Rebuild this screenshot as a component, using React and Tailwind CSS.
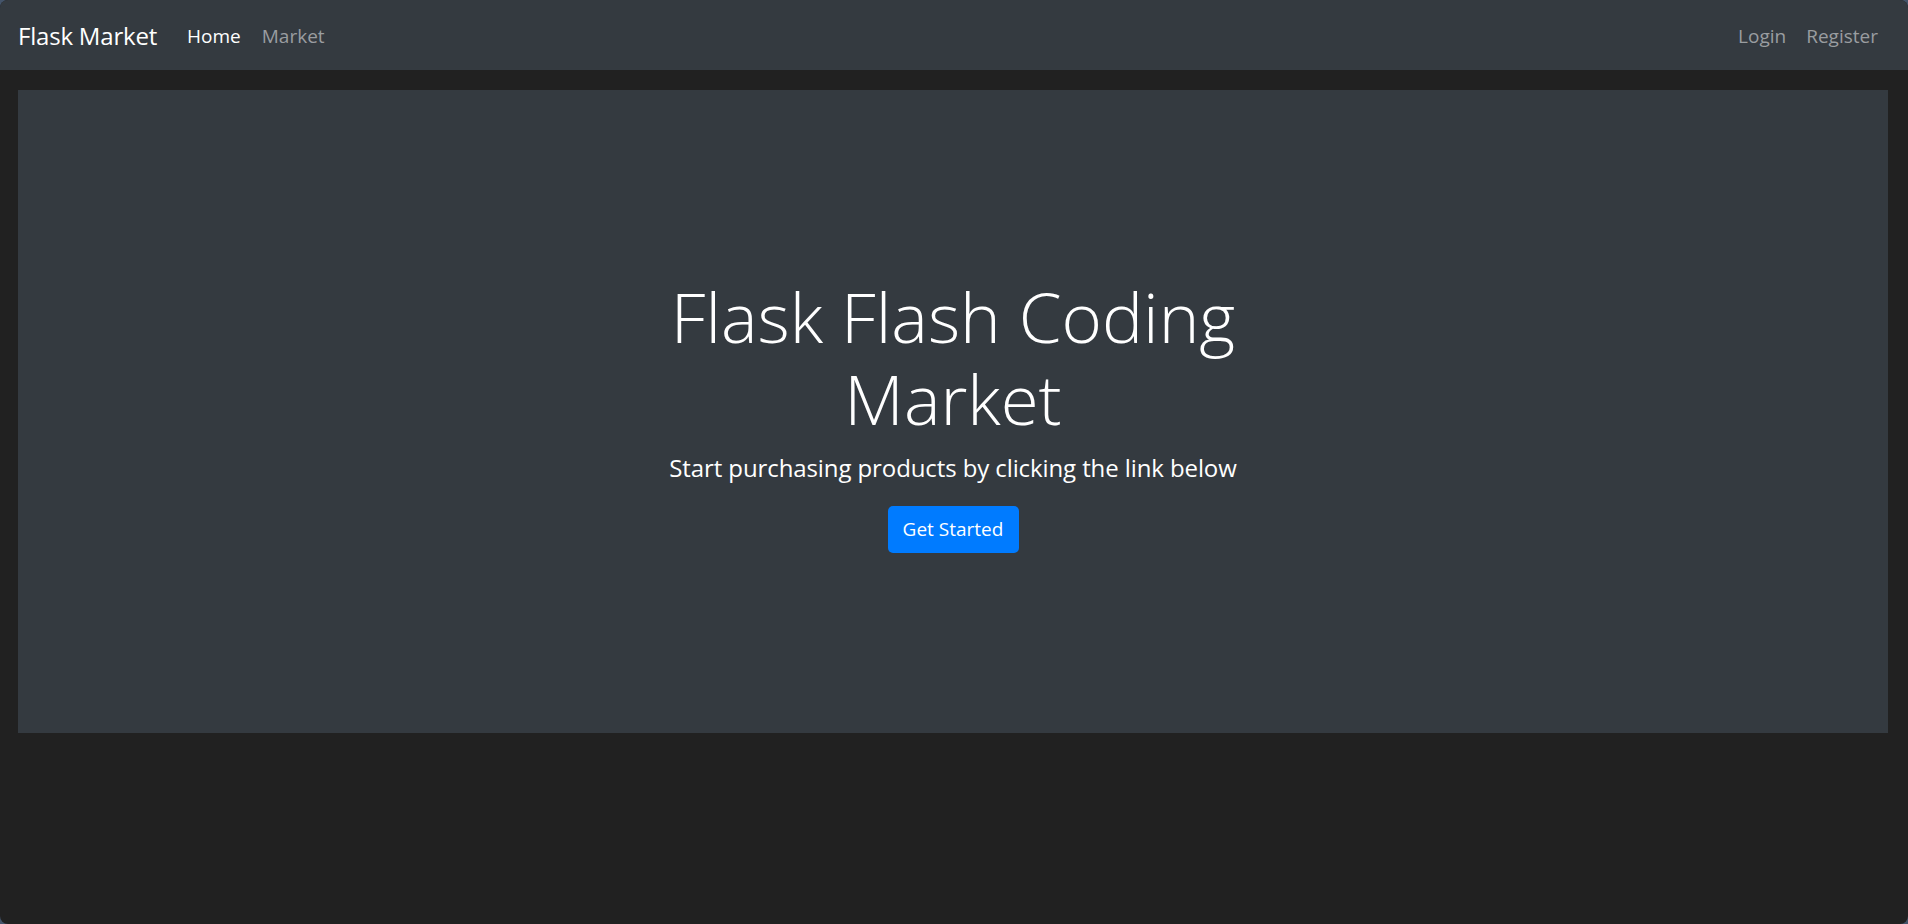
import React from "react";

const font = { fontFamily: '"Open Sans", "Noto Sans", sans-serif' };

function NavBar() {
    return (
        <nav className="flex items-center justify-between h-[70px] bg-[#343a40] pl-[18px] pr-[30px] pt-[2px]">
            <div className="flex items-center">
                <a href="#" className="text-[24px] text-white mr-[30px] tracking-[-0.2px]">Flask Market</a>
                <a href="#" className="text-[19px] text-white mr-[21px]">Home</a>
                <a href="#" className="text-[19px] text-[#9a9da0]">Market</a>
            </div>
            <div className="flex items-center gap-[20px]">
                <a href="#" className="text-[19px] text-[#9a9da0]">Login</a>
                <a href="#" className="text-[19px] text-[#9a9da0]">Register</a>
            </div>
        </nav>
    );
}

export default function App() {
    return (
        <div className="w-full h-[924px] bg-[#44546a]" style={font}>
            <div className="h-full bg-[#212121] rounded-[8px] overflow-hidden">
                <NavBar />
                <div className="px-[18px] pt-[20px] pr-[20px]">
                    <section className="h-[643px] bg-[#343a40] flex flex-col items-center justify-center pt-[4px]">
                        <div className="w-[660px] text-center text-white">
                            <h1 className="text-[69px] font-light leading-[82px]">Flask Flash Coding Market</h1>
                            <p className="text-[24px] leading-[36px] mt-[11px] tracking-[-0.1px]">Start purchasing products by clicking the link below</p>
                        </div>
                        <button className="mt-[20px] w-[131px] h-[47px] rounded-[5px] bg-[#007bff] text-white text-[19px]">
                            Get Started
                        </button>
                    </section>
                </div>
            </div>
        </div>
    );
}
